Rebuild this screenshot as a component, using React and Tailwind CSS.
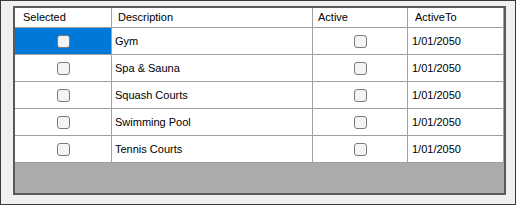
import React from "react";

const rows = [
  { name: "Gym", date: "1/01/2050", selected: true },
  { name: "Spa & Sauna", date: "1/01/2050" },
  { name: "Squash Courts", date: "1/01/2050" },
  { name: "Swimming Pool", date: "1/01/2050" },
  { name: "Tennis Courts", date: "1/01/2050" },
];

function Box() {
  return (
    <div className="w-[13px] h-[13px] rounded-[3px] border border-[#7a7a7a] bg-[#f4f4f4]" />
  );
}

export default function App() {
  return (
    <div
      className="w-[516px] h-[205px] border border-[#3a3a3a] bg-[#f0f0f0] pl-[12px] pt-[5px] text-[11px] text-black"
      style={{ fontFamily: '"Liberation Sans", Arial, sans-serif' }}
    >
      <div className="w-[493px] h-[189px] border-2 border-[#5a5a5a] bg-[#ababab] flex flex-col">
        <div className="flex h-[20px] bg-white border-b border-[#a0a0a0] shrink-0">
          <div className="w-[97px] border-r border-[#a0a0a0] flex items-center pl-[8px]">Selected</div>
          <div className="w-[201px] border-r border-[#a0a0a0] flex items-center pl-[6px]">Description</div>
          <div className="w-[95px] border-r border-[#a0a0a0] flex items-center pl-[5px]">Active</div>
          <div className="flex-1 border-r border-[#a0a0a0] flex items-center pl-[7px]">ActiveTo</div>
        </div>
        {rows.map((r) => (
          <div key={r.name} className="flex h-[27px] bg-white border-b border-[#a0a0a0] shrink-0">
            <div
              className={
                r.selected
                  ? "w-[97px] border-r border-[#a0a0a0] flex items-center justify-center bg-[#0078d7]"
                  : "w-[97px] border-r border-[#a0a0a0] flex items-center justify-center"
              }
            >
              <Box />
            </div>
            <div className="w-[201px] border-r border-[#a0a0a0] flex items-center pl-[3px]">{r.name}</div>
            <div className="w-[95px] border-r border-[#a0a0a0] flex items-center justify-center">
              <Box />
            </div>
            <div className="flex-1 border-r border-[#a0a0a0] flex items-center pl-[4px]">{r.date}</div>
          </div>
        ))}
      </div>
    </div>
  );
}
